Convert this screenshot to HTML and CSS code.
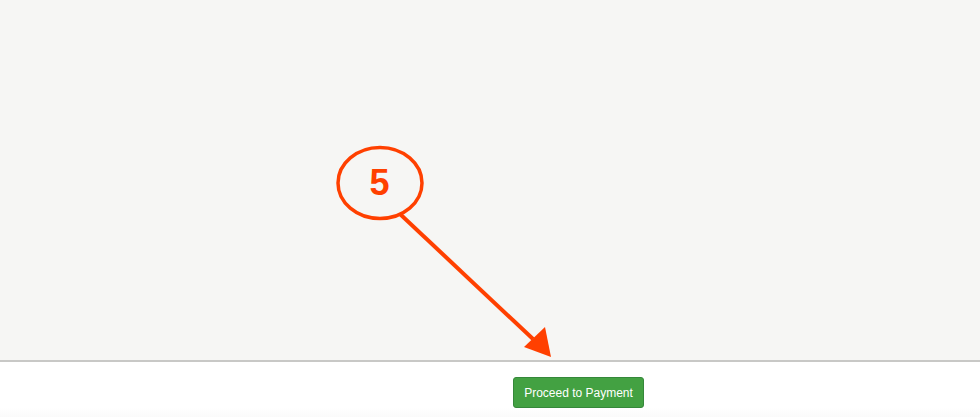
FILE: index.html
```html
<!DOCTYPE html>
<html>
<head>
<meta charset="utf-8">
<link rel="stylesheet" href="styles.css">
</head>
<body>
<div class="page">
  <main class="stage">
    <svg class="annotation" width="980" height="360" viewBox="0 0 980 360" xmlns="http://www.w3.org/2000/svg">
      <ellipse cx="380" cy="183" rx="42" ry="35.5" fill="none" stroke="#ff4000" stroke-width="3.5"/>
      <text x="379.5" y="195" text-anchor="middle" class="num">5</text>
      <line x1="400" y1="214" x2="533" y2="339" stroke="#ff4000" stroke-width="4"/>
      <polygon points="551,357 524,347 545,327" fill="#ff4000"/>
    </svg>
  </main>
  <footer class="footer">
    <button class="btn">Proceed to Payment</button>
  </footer>
</div>
</body>
</html>
```

FILE: styles.css
```css
html, body {
  margin: 0;
  padding: 0;
}
body {
  background: #ffffff;
  font-family: "Liberation Sans", Arial, sans-serif;
}
.page {
  width: 980px;
  height: 417px;
  display: flex;
  flex-direction: column;
  overflow: hidden;
}
.stage {
  position: relative;
  height: 360px;
  background: #f6f6f4;
  border-bottom: 2px solid #c8c8c6;
  flex: none;
}
.annotation {
  position: absolute;
  left: 0;
  top: 0;
}
.num {
  font-family: "Liberation Sans", Arial, sans-serif;
  font-weight: bold;
  font-size: 36px;
  fill: #ff4000;
}
.footer {
  flex: 1;
  display: flex;
  align-items: flex-start;
  padding: 15px 0 0 513px;
  background: linear-gradient(#ffffff 0, #ffffff 46px, #fafafa 55px);
}
.btn {
  width: 131px;
  height: 31px;
  background: #43a142;
  border: 1px solid #35883a;
  border-radius: 3px;
  color: #ffffff;
  font-family: "Liberation Sans", Arial, sans-serif;
  font-size: 12px;
  padding: 0;
  cursor: pointer;
}
```
